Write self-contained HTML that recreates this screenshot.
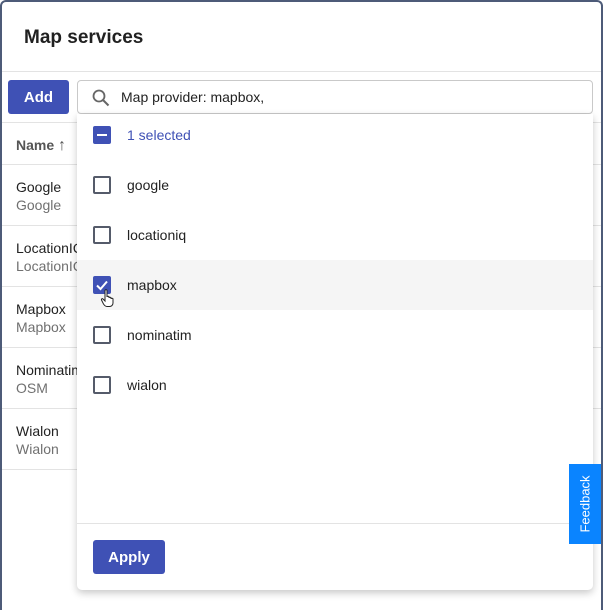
<!DOCTYPE html>
<html><head><meta charset="utf-8"><style>
*{box-sizing:border-box;margin:0;padding:0}
body{width:603px;height:610px;overflow:hidden;background:#fff;font-family:"Liberation Sans",sans-serif;position:relative}
.frame{position:absolute;left:0;top:0;width:603px;height:610px;border:2px solid #4d5b78;border-bottom:none;border-radius:6px 6px 0 0}
.title{position:absolute;left:24px;top:27px;font-size:19px;font-weight:bold;color:#212121}
.hr{position:absolute;left:2px;right:2px;height:1px;background:#e3e3e3}
.add{position:absolute;left:8px;top:80px;width:61px;height:34px;background:#3f51b5;border-radius:3px;color:#fff;font-weight:bold;font-size:15px;text-align:center;line-height:35px}
.search{position:absolute;left:77px;top:80px;width:516px;height:34px;border:1px solid #c9c9c9;border-radius:4px}
.search span{position:absolute;left:43px;top:8px;font-size:14px;color:#222}
.th{position:absolute;left:16px;top:137px;font-size:14px;font-weight:bold;color:#555}
.row{position:absolute;left:16px;font-size:14px;line-height:18px;color:#222}
.row div+div{color:#707070}
.panel{position:absolute;left:77px;top:114px;width:516px;height:476px;background:#fff;border-radius:0 0 5px 5px;box-shadow:0 3px 8px rgba(0,0,0,.22)}
.item{position:absolute;left:0;width:516px;height:50px}
.cb{position:absolute;left:16px;top:16px;width:18px;height:18px;border:2px solid #555b6a;border-radius:2px}
.cb.on{background:#3f51b5;border-color:#3f51b5}
.lbl{position:absolute;left:50px;top:17px;font-size:14px;color:#222}
.apply{position:absolute;left:16px;top:426px;width:72px;height:34px;background:#3f51b5;border-radius:3px;color:#fff;font-weight:bold;font-size:15px;text-align:center;line-height:35px}
.fb{position:absolute;left:569px;top:464px;width:32px;height:80px;background:#0a84ff}
.fb span{position:absolute;left:50%;top:50%;transform:translate(-50%,-50%) rotate(-90deg);color:#fff;font-size:13px;white-space:nowrap}
</style></head><body>
<div class="frame"></div>
<div class="title">Map services</div>
<div class="hr" style="top:71px"></div>
<div class="add">Add</div>
<div class="search">
<svg style="position:absolute;left:13px;top:7px" width="20" height="20" viewBox="0 0 20 20"><circle cx="8" cy="8" r="5.5" fill="none" stroke="#666" stroke-width="1.8"/><path d="M12 12L17.5 17.5" stroke="#666" stroke-width="2"/></svg>
<span>Map provider: mapbox,</span></div>
<div class="hr" style="top:122px"></div>
<div class="th">Name <span style="font-weight:normal;font-size:16px">↑</span></div>
<div class="hr" style="top:164px"></div>
<div class="row" style="top:178px"><div>Google</div><div>Google</div></div>
<div class="hr" style="top:225px"></div>
<div class="row" style="top:239px"><div>LocationIQ</div><div>LocationIQ</div></div>
<div class="hr" style="top:286px"></div>
<div class="row" style="top:300px"><div>Mapbox</div><div>Mapbox</div></div>
<div class="hr" style="top:347px"></div>
<div class="row" style="top:361px"><div>Nominatim</div><div>OSM</div></div>
<div class="hr" style="top:408px"></div>
<div class="row" style="top:422px"><div>Wialon</div><div>Wialon</div></div>
<div class="hr" style="top:469px;width:80px"></div>
<div class="panel">
<div class="item" style="top:-4px"><div class="cb on"><div style="position:absolute;left:2px;top:6px;width:10px;height:2px;background:#fff"></div></div><div class="lbl" style="color:#3f51b5">1 selected</div></div>
<div class="item" style="top:46px"><div class="cb"></div><div class="lbl">google</div></div>
<div class="item" style="top:96px"><div class="cb"></div><div class="lbl">locationiq</div></div>
<div class="item" style="top:146px;background:#f5f5f5"><div class="cb on"><svg style="position:absolute;left:0;top:0" width="14" height="14" viewBox="0 0 14 14"><path d="M2 7.5L5.5 11L12 3.5" fill="none" stroke="#fff" stroke-width="2"/></svg></div><div class="lbl">mapbox</div>
<svg style="position:absolute;left:23px;top:28px" width="16" height="20" viewBox="0 0 16 20"><path d="M5 2.5c0-1 2-1 2 0V9c0-1 2-1 2 0v1c0-1 2-1 2 0v1c0-1 2-1 2 0v4c0 2-1.5 3.5-3.5 3.5H7C5.5 18.5 4.5 17.5 3.5 16L1.5 12c-.5-1 .8-1.8 1.5-1L5 13z" fill="#fff" stroke="#222" stroke-width="1"/></svg></div>
<div class="item" style="top:196px"><div class="cb"></div><div class="lbl">nominatim</div></div>
<div class="item" style="top:246px"><div class="cb"></div><div class="lbl">wialon</div></div>
<div style="position:absolute;left:0;right:0;top:409px;height:1px;background:#e3e3e3"></div>
<div class="apply">Apply</div>
</div>
<div class="fb"><span>Feedback</span></div>
</body></html>
